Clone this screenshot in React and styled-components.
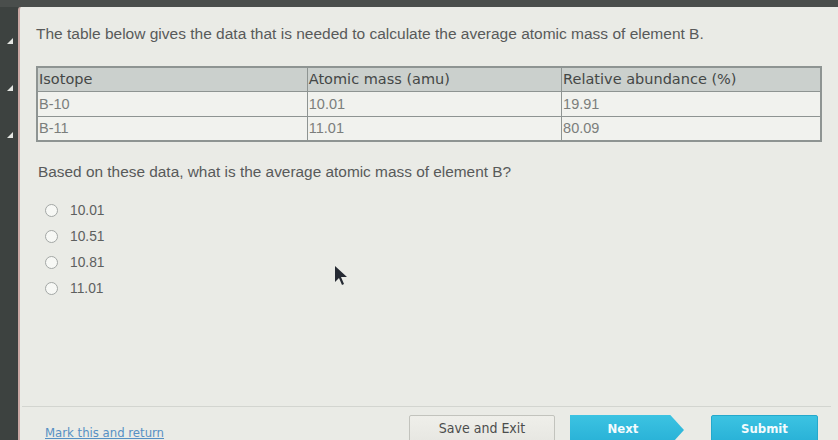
import React from 'react';
import styled, { createGlobalStyle } from 'styled-components';

const GlobalStyle = createGlobalStyle`
  html, body { margin: 0; padding: 0; width: 838px; height: 440px; overflow: hidden; background: #454a48; }
  * { box-sizing: border-box; }
`;

const Screen = styled.div`
  display: flex;
  width: 838px;
  height: 440px;
  background: #4a4e4c;
  padding-top: 7px;
`;

const SideBar = styled.div`
  width: 18px;
  flex-shrink: 0;
  display: flex;
  flex-direction: column;
  align-items: center;
  padding-top: 31px;
  gap: 41px;
  background: #3d4240;
`;

const Marker = styled.span`
  width: 0;
  height: 0;
  border-left: 6px solid transparent;
  border-bottom: 6px solid #e4e6e2;
  margin-left: 2px;
`;

const Panel = styled.div`
  position: relative;
  flex: 1;
  display: flex;
  flex-direction: column;
  background: #eaebe6;
  border-left: 2px solid #c9a7a3;
  border-top-left-radius: 3px;
  padding: 18px 17px 0 16px;
  font-family: "Liberation Sans", Arial, sans-serif;
  color: #585a5a;
`;

const Prompt = styled.p`
  margin: 0;
  font-size: 15.5px;
  line-height: 18px;
`;

const Table = styled.table`
  margin-top: 23px;
  width: 786px;
  border-collapse: collapse;
  border: 2px solid #8e9492;
`;

const Th = styled.th`
  text-align: left;
  font-family: "DejaVu Sans", Verdana, sans-serif;
  font-weight: normal;
  font-size: 14.5px;
  color: #444746;
  background: #cbd0cd;
  height: 24px;
  padding: 0 1px;
  border: 1px solid #8e9492;
  width: ${p => p.$w}px;
`;

const Td = styled.td`
  font-size: 14.5px;
  color: #7b7e7c;
  height: 25px;
  padding: 0 1px;
  border: 1px solid #8e9492;
  background: #f1f2ee;
`;

const Question = styled.p`
  margin: 21px 0 0 2px;
  font-size: 15.4px;
  line-height: 18px;
`;

const Options = styled.div`
  display: flex;
  flex-direction: column;
  gap: 8px;
  margin-top: 20px;
  padding-left: 9px;
`;

const Option = styled.label`
  display: flex;
  align-items: center;
  gap: 12px;
  height: 18px;
  font-size: 13.8px;
  color: #5d605f;
`;

const Radio = styled.span`
  width: 13px;
  height: 13px;
  border-radius: 50%;
  border: 1.5px solid #a3a7a5;
  background: #f7f8f5;
`;

const Spacer = styled.div`
  flex: 1;
`;

const Footer = styled.div`
  display: flex;
  align-items: flex-start;
  border-top: 1px solid #d3d5d0;
  margin: 0 -9px 0 -14px;
  padding: 8px 0 0 23px;
  height: 34px;
  font-family: "Liberation Sans Narrow", "DejaVu Sans Condensed", "Liberation Sans", sans-serif;
`;

const MarkLink = styled.a`
  margin-top: 10px;
  font-size: 13px;
  line-height: 15px;
  color: #5690c4;
  text-decoration: underline;
  width: 364px;
`;

const Button = styled.button`
  font-family: inherit;
  height: 30px;
  width: ${p => p.$w}px;
  margin-left: ${p => p.$ml || 0}px;
  font-size: ${p => (p.$primary ? 13 : 14)}px;
  border-radius: 2px;
  border: 1px solid ${p => (p.$primary ? '#25a9cc' : '#c2c3bd')};
  background: ${p => (p.$primary ? 'linear-gradient(#3cc3e2, #27b0d6)' : 'linear-gradient(#efefea, #e6e6e1)')};
  color: ${p => (p.$primary ? '#f4fbfd' : '#4b4d4c')};
  font-weight: ${p => (p.$primary ? 'bold' : 'normal')};
  padding: 0 0 4px;
`;

const NextButton = styled(Button)`
  border: none;
  border-radius: 0;
  padding-right: 8px;
  clip-path: polygon(0 0, 88% 0, 100% 50%, 88% 100%, 0 100%);
`;

const Cursor = styled.svg`
  position: absolute;
  left: 313px;
  top: 258px;
`;

const rows = [
  ['B-10', '10.01', '19.91'],
  ['B-11', '11.01', '80.09'],
];

const answers = ['10.01', '10.51', '10.81', '11.01'];

function App() {
  return (
    <Screen>
      <GlobalStyle />
      <SideBar>
        <Marker />
        <Marker />
        <Marker />
      </SideBar>
      <Panel>
        <Prompt>The table below gives the data that is needed to calculate the average atomic mass of element B.</Prompt>
        <Table>
          <thead>
            <tr>
              <Th $w={271}>Isotope</Th>
              <Th $w={255}>Atomic mass (amu)</Th>
              <Th $w={260}>Relative abundance (%)</Th>
            </tr>
          </thead>
          <tbody>
            {rows.map(r => (
              <tr key={r[0]}>
                {r.map((c, i) => <Td key={i}>{c}</Td>)}
              </tr>
            ))}
          </tbody>
        </Table>
        <Question>Based on these data, what is the average atomic mass of element B?</Question>
        <Options>
          {answers.map(a => (
            <Option key={a}>
              <Radio />
              {a}
            </Option>
          ))}
        </Options>
        <Spacer />
        <Footer>
          <MarkLink>Mark this and return</MarkLink>
          <Button $w={146}>Save and Exit</Button>
          <NextButton $primary $w={114} $ml={15}>Next</NextButton>
          <Button $primary $w={107} $ml={27}>Submit</Button>
        </Footer>
        <Cursor width="16" height="22" viewBox="0 0 16 22">
          <path d="M2 1 L2 17 L6 13 L9 20 L11 19 L8 12 L14 12 Z" fill="#262a33" />
        </Cursor>
      </Panel>
    </Screen>
  );
}

export default App;
